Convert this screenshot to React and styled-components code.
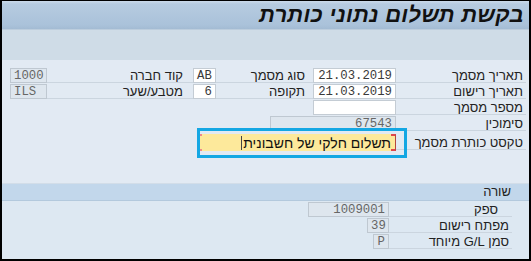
import styled, { createGlobalStyle } from "styled-components";

const GlobalStyle = createGlobalStyle`
  html, body {
    margin: 0;
    padding: 0;
    background: #000;
  }
  * { box-sizing: border-box; }
`;

const Frame = styled.div`
  position: relative;
  width: 531px;
  height: 261px;
  border-style: solid;
  border-color: #000;
  border-width: 1px 2px 2px 2px;
  background: #dde8f2;
  direction: rtl;
  font-family: "Liberation Sans", "DejaVu Sans", "Noto Sans", sans-serif;
  overflow: hidden;
`;

const TitleBar = styled.div`
  height: 29px;
  display: flex;
  align-items: center;
  padding-right: 5px;
  background: linear-gradient(#cbdaea 0px, #b6cbe0 3px, #aac2da 24px, #a3bbd3 28px);
  border-bottom: 1px solid #bccddd;
`;

const Title = styled.h1`
  margin: 0;
  font-size: 22px;
  font-weight: bold;
  font-style: italic;
  color: #111;
  letter-spacing: 0.3px;
`;

const Toolbar = styled.div`
  height: 30px;
  background: #cfdce7;
`;

const HeaderForm = styled.div`
  position: relative;
  height: 124px;
  padding: 8px 3px 0 8px;
  background: #e2eaf3;
  border-bottom: 1px solid #d2dde8;
  display: flex;
  flex-direction: column;
`;

const Row = styled.div`
  display: grid;
  grid-template-columns: 130px 83px 13px 84px 23px 18px 128px 37px;
  height: ${(p) => p.$h || 16}px;
  align-items: start;
`;

const Label = styled.div`
  grid-column: ${(p) => p.$col};
  height: 15px;
  line-height: 15px;
  font-size: 13px;
  color: #222;
  padding-right: ${(p) => p.$pad ?? 3}px;
  border-bottom: 1px solid #cbd5df;
  white-space: nowrap;
`;

const Field = styled.div`
  grid-column: ${(p) => p.$col};
  justify-self: ${(p) => (p.$w ? "start" : "stretch")};
  width: ${(p) => (p.$w ? `${p.$w}px` : "auto")};
  height: 15px;
  line-height: 14px;
  font-family: "Liberation Mono", "DejaVu Sans Mono", monospace;
  font-size: 12.3px;
  direction: ltr;
  text-align: ${(p) => p.$align || "right"};
  padding: 0 3px;
  border: 1px solid ${(p) => (p.$ro ? "#bfc8d1" : "#c4ccd4")};
  background: ${(p) => (p.$ro ? "#dee6ee" : "#ffffff")};
  color: ${(p) => (p.$ro ? "#666" : "#3a3a3a")};
  overflow: hidden;
  white-space: nowrap;
`;

const RequiredField = styled.div`
  grid-column: 2 / span 4;
  justify-self: start;
  width: 197px;
  margin-top: 2px;
  position: relative;
  height: 17px;
  display: flex;
  align-items: center;
  padding-right: 5px;
  background: #fde99b;
  font-size: 14px;
  color: #111;
  white-space: nowrap;

  &::before,
  &::after {
    content: "";
    position: absolute;
    top: 0;
    bottom: 0;
    width: 4px;
    border-top: 2px solid #e0474c;
    border-bottom: 2px solid #e0474c;
  }
  &::after {
    right: 0;
    border-right: 1px solid #b5473f;
  }
  &::before {
    left: 0;
    border-color: #ef8a8a;
    width: 3px;
  }
`;

const Caret = styled.span`
  display: inline-block;
  width: 1px;
  height: 14px;
  margin-right: 1px;
  background: #444;
`;

const Highlight = styled.div`
  position: absolute;
  left: 195px;
  top: 68px;
  width: 210px;
  height: 30px;
  border: 3px solid #14a7e3;
  pointer-events: none;
`;

const SectionBar = styled.div`
  height: 17px;
  line-height: 16px;
  padding-right: 18px;
  font-size: 13px;
  color: #222;
  background: #c2d7eb;
  border-bottom: 1px solid #b3c9dd;
`;

const ItemForm = styled.div`
  padding: 1px 17px 0 0;
  display: flex;
  flex-direction: column;
`;

const ItemRow = styled.div`
  display: grid;
  grid-template-columns: 123px 81px;
  height: 16px;
  align-items: start;
`;

const headerRows = [
  [
    { label: "תאריך מסמך", value: "21.03.2019" },
    { label: "סוג מסמך", value: "AB", align: "left" },
    { label: "קוד חברה", value: "1000", ro: true },
  ],
  [
    { label: "תאריך רישום", value: "21.03.2019" },
    { label: "תקופה", value: "6" },
    { label: "מטבע/שער", value: "ILS", ro: true },
  ],
];

const itemRows = [
  { label: "ספק", value: "1009001", w: 81, pad: 14 },
  { label: "מפתח רישום", value: "39", w: 22 },
  { label: "סמן G/L מיוחד", value: "P", w: 16 },
];

export default function App() {
  return (
    <>
      <GlobalStyle />
      <Frame>
        <TitleBar>
          <Title>בקשת תשלום נתוני כותרת</Title>
        </TitleBar>
        <Toolbar />
        <HeaderForm>
          {headerRows.map((row, i) => (
            <Row key={i}>
              <Label $col={1}>{row[0].label}</Label>
              <Field $col={2}>{row[0].value}</Field>
              <Label $col="3 / span 2" $pad={8}>{row[1].label}</Label>
              <Field $col={5} $align={row[1].align}>{row[1].value}</Field>
              <Label $col="6 / span 2" $pad={10}>{row[2].label}</Label>
              <Field $col={8} $ro={row[2].ro} $align="left">{row[2].value}</Field>
            </Row>
          ))}
          <Row>
            <Label $col={1}>מספר מסמך</Label>
            <Field $col={2}></Field>
          </Row>
          <Row>
            <Label $col={1}>סימוכין</Label>
            <Field $col="2 / span 3" $ro $w={126}>67543</Field>
          </Row>
          <Row $h={20}>
            <Label $col={1} style={{ marginTop: "3px" }}>טקסט כותרת מסמך</Label>
            <RequiredField>
              <span>תשלום חלקי של חשבונית</span>
              <Caret />
            </RequiredField>
          </Row>
          <Highlight />
        </HeaderForm>
        <SectionBar>שורה</SectionBar>
        <ItemForm>
          {itemRows.map((r) => (
            <ItemRow key={r.label}>
              <Label $col={1} $pad={r.pad ?? 3}>{r.label}</Label>
              <Field $col={2} $ro $w={r.w}>{r.value}</Field>
            </ItemRow>
          ))}
        </ItemForm>
      </Frame>
    </>
  );
}
